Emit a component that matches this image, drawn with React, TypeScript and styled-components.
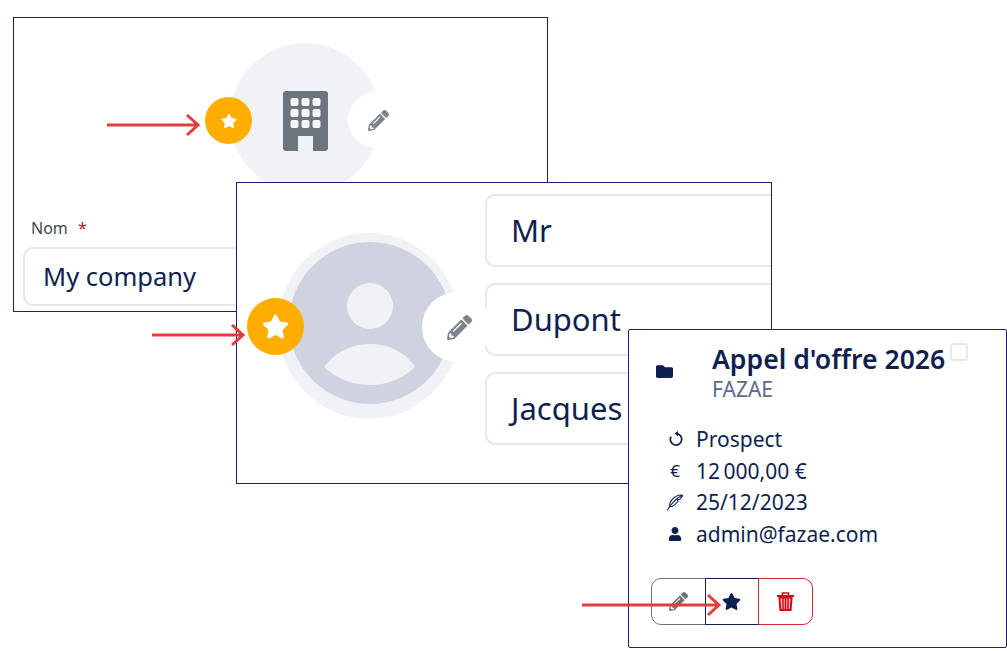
import React from "react";
import styled, { createGlobalStyle } from "styled-components";
import { FaStar, FaPencilAlt, FaFolder, FaUser } from "react-icons/fa";
import { BsFeather } from "react-icons/bs";

const navy = "#0f1f50";
const frame = "#1b1f6b";
const grey = "#6c757d";
const orange = "#ffae00";
const pale = "#f1f2f6";
const line = "#e4e7ee";

const GlobalStyle = createGlobalStyle`
  html, body {
    margin: 0;
    padding: 0;
    background: #fff;
  }
  body {
    font-family: "Noto Sans", "Open Sans", sans-serif;
    color: ${navy};
  }
`;

const Canvas = styled.div`
  position: relative;
  width: 1007px;
  height: 651px;
  overflow: hidden;
  background: #fff;
`;

/* the three pasted captures sit freely on the canvas */
const Capture = styled.section<{ $l: number; $t: number; $w: number; $h: number; $r?: number }>`
  position: absolute;
  left: ${(p) => p.$l}px;
  top: ${(p) => p.$t}px;
  width: ${(p) => p.$w}px;
  height: ${(p) => p.$h}px;
  box-sizing: border-box;
  border: 1px solid ${frame};
  border-radius: ${(p) => p.$r || 0}px;
  background: #fff;
  overflow: hidden;
`;

const CompanyCapture = styled(Capture)`
  display: flex;
  flex-direction: column;
  padding-top: 25px;
`;

const CompanyAvatar = styled.div`
  position: relative;
  display: flex;
  align-items: center;
  justify-content: center;
  width: 150px;
  height: 150px;
  margin-left: 216px;
  border-radius: 50%;
  background: ${pale};
`;

const Badge = styled.div<{ $size: number; $font: number; $x: number; $y: number }>`
  position: absolute;
  left: ${(p) => p.$x}px;
  top: ${(p) => p.$y}px;
  display: flex;
  align-items: center;
  justify-content: center;
  width: ${(p) => p.$size}px;
  height: ${(p) => p.$size}px;
  border-radius: 50%;
  background: ${orange};
  color: #fff;
  font-size: ${(p) => p.$font}px;
`;

const EditBadge = styled(Badge)`
  box-sizing: border-box;
  padding-left: 4px;
  background: #fff;
  color: #7d838c;
  z-index: 2;
`;

const Field = styled.div`
  margin: 24px 0 0 9px;
`;

const Label = styled.label`
  display: block;
  margin: 0 0 8px 8px;
  font-size: 16px;
  line-height: 22px;
  color: #3f4656;
  & > b {
    margin-left: 6px;
    font-weight: 400;
    color: #c8102e;
  }
`;

const TextBox = styled.div<{ $size: number; $h: number; $pad: number }>`
  box-sizing: border-box;
  display: flex;
  align-items: center;
  height: ${(p) => p.$h}px;
  padding: 0 0 2px ${(p) => p.$pad}px;
  border: 2px solid ${line};
  border-right: 0;
  border-radius: 10px 0 0 10px;
  background: #fff;
  font-size: ${(p) => p.$size}px;
  color: ${navy};
`;

const PersonCapture = styled(Capture)`
  display: flex;
  align-items: flex-start;
  padding: 11px 0 0 41px;
`;

const PersonAvatar = styled.div`
  position: relative;
  flex: none;
  box-sizing: border-box;
  width: 182px;
  height: 186px;
  margin-top: 39px;
  padding: 9px 11px 14px;
  border-radius: 50%;
  background: ${pale};
`;

const Fields = styled.div`
  display: flex;
  flex-direction: column;
  gap: 16px;
  flex: 1;
  margin-left: 25px;
`;

const Silhouette = styled.svg`
  display: block;
  width: 162px;
  height: 162px;
`;

const OfferCapture = styled(Capture)`
  padding: 11px 0 0 27px;
`;

const OfferHead = styled.header`
  position: relative;
  display: flex;
  align-items: center;
`;

const FolderIcon = styled.span`
  display: flex;
  width: 56px;
  font-size: 17px;
  color: ${navy};
`;

const Title = styled.h2`
  margin: 0;
  font-size: 26.6px;
  line-height: 36px;
  font-weight: 600;
  white-space: nowrap;
`;

const Company = styled.div`
  font-size: 21px;
  line-height: 24px;
  color: #5b6a8c;
`;

const Check = styled.span`
  position: absolute;
  left: 294px;
  top: 2px;
  box-sizing: border-box;
  width: 18px;
  height: 18px;
  border: 2px solid ${line};
  border-radius: 4px;
`;

const Rows = styled.ul`
  display: flex;
  flex-direction: column;
  margin: 22px 0 0 11px;
  padding: 0;
  list-style: none;
`;

const Row = styled.li`
  display: flex;
  align-items: center;
  height: 31.7px;
  font-size: 21px;
  color: ${navy};
`;

const RowIcon = styled.span<{ $size?: number }>`
  display: flex;
  justify-content: center;
  width: 16px;
  margin-right: 13px;
  font-size: ${(p) => p.$size || 14}px;
`;

const Actions = styled.div`
  display: flex;
  margin: 28px 0 0 -5px;
`;

const Action = styled.button<{ $tone: string; $corner?: "left" | "right" }>`
  display: flex;
  align-items: center;
  justify-content: center;
  box-sizing: border-box;
  width: 54.5px;
  height: 47px;
  margin: 0 -1px 0 0;
  padding: 0;
  border: 1.5px solid ${(p) => p.$tone};
  border-radius: ${(p) =>
    p.$corner === "left" ? "10px 0 0 10px" : p.$corner === "right" ? "0 10px 10px 0" : "0"};
  background: #fff;
  color: ${(p) => p.$tone};
  font-size: 19px;
`;

const ArrowSvg = styled.svg<{ $l: number; $t: number }>`
  position: absolute;
  left: ${(p) => p.$l}px;
  top: ${(p) => p.$t}px;
  z-index: 5;
  overflow: visible;
`;

function Arrow({ x, y, length }: { x: number; y: number; length: number }) {
  return (
    <ArrowSvg $l={x} $t={y - 11} width={length} height={22} viewBox={`0 0 ${length} 22`}>
      <path
        d={`M0 11H${length - 1}M${length - 12} 1L${length - 1} 11L${length - 12} 21`}
        fill="none"
        stroke="#e23d3d"
        strokeWidth="3"
      />
    </ArrowSvg>
  );
}

function Building() {
  return (
    <svg width="45" height="60" viewBox="0 0 45 60" style={{ marginTop: 6 }}>
      <path
        d="M3 0H42a3 3 0 0 1 3 3V57a3 3 0 0 1-3 3H30V45H15V60H3a3 3 0 0 1-3-3V3a3 3 0 0 1 3-3Z"
        fill={grey}
      />
      {[7.5, 18.5, 29.5].flatMap((x) =>
        [7, 18, 29].map((y) => (
          <rect key={`${x}-${y}`} x={x} y={y} width="8" height="8" rx="2" fill="#f7f7f8" />
        ))
      )}
    </svg>
  );
}

function Refresh() {
  return (
    <svg width="14" height="15" viewBox="0 0 14 15" style={{ marginLeft: 1 }}>
      <path d="M7 2.6a5.7 5.7 0 1 1-5 3" fill="none" stroke={navy} strokeWidth="1.7" />
      <path d="M5.6 2.6L9 0v5.2Z" fill={navy} />
    </svg>
  );
}

function Trash() {
  return (
    <svg width="17" height="19" viewBox="0 0 17 19">
      <path d="M2.4 5.5H14.6L13.6 18H3.4Z" fill="#f4b9bd" stroke="#cc0f16" strokeWidth="2" />
      <path d="M0 4H17" stroke="#cc0f16" strokeWidth="2" />
      <path d="M5.5 3.5V1H11.5V3.5" fill="none" stroke="#cc0f16" strokeWidth="1.6" />
      <path d="M6 6V17M8.5 6V17M11 6V17" stroke="#cc0f16" strokeWidth="1.5" />
    </svg>
  );
}

export default function App() {
  return (
    <Canvas>
      <GlobalStyle />

      <CompanyCapture $l={13} $t={17} $w={535} $h={295}>
        <CompanyAvatar>
          <Building />
          <Badge $size={47} $font={16} $x={-25} $y={54}>
            <FaStar />
          </Badge>
          <EditBadge $size={56} $font={21} $x={118} $y={49}>
            <FaPencilAlt />
          </EditBadge>
        </CompanyAvatar>
        <Field>
          <Label>
            Nom <b>*</b>
          </Label>
          <TextBox $size={25.5} $h={59} $pad={18}>
            My company
          </TextBox>
        </Field>
      </CompanyCapture>

      <PersonCapture $l={236} $t={182} $w={536} $h={302}>
        <PersonAvatar>
          <Silhouette viewBox="0 0 162 162">
            <circle cx="81" cy="81" r="81" fill="#cfd3e0" />
            <circle cx="81" cy="64" r="23" fill={pale} />
            <path d="M35 125C46 110 62 102 81 102s35 8 45 23C115 136 99 143 81 143s-34-7-46-18Z" fill={pale} />
          </Silhouette>
          <Badge $size={57} $font={27} $x={-31} $y={65}>
            <FaStar />
          </Badge>
          <EditBadge $size={70} $font={25} $x={144} $y={59}>
            <FaPencilAlt />
          </EditBadge>
        </PersonAvatar>
        <Fields>
          <TextBox $size={31} $h={73} $pad={24}>Mr</TextBox>
          <TextBox $size={31} $h={73} $pad={24}>Dupont</TextBox>
          <TextBox $size={31} $h={73} $pad={24}>Jacques</TextBox>
        </Fields>
      </PersonCapture>

      <OfferCapture $l={628} $t={329} $w={379} $h={319} $r={2}>
        <OfferHead>
          <FolderIcon>
            <FaFolder />
          </FolderIcon>
          <div>
            <Title>Appel d'offre 2026</Title>
            <Company>FAZAE</Company>
          </div>
          <Check />
        </OfferHead>
        <Rows>
          <Row>
            <RowIcon><Refresh /></RowIcon>
            Prospect
          </Row>
          <Row>
            <RowIcon $size={17}>€</RowIcon>
            12{"\u202f"}000,00 €
          </Row>
          <Row>
            <RowIcon $size={19}><BsFeather /></RowIcon>
            25/12/2023
          </Row>
          <Row>
            <RowIcon><FaUser /></RowIcon>
            admin@fazae.com
          </Row>
        </Rows>
        <Actions>
          <Action $tone={grey} $corner="left"><FaPencilAlt /></Action>
          <Action $tone={navy}><FaStar /></Action>
          <Action $tone="#cc2a30" $corner="right"><Trash /></Action>
        </Actions>
      </OfferCapture>

      <Arrow x={107} y={124.5} length={92} />
      <Arrow x={152} y={335} length={92} />
      <Arrow x={582} y={605} length={138} />
    </Canvas>
  );
}
